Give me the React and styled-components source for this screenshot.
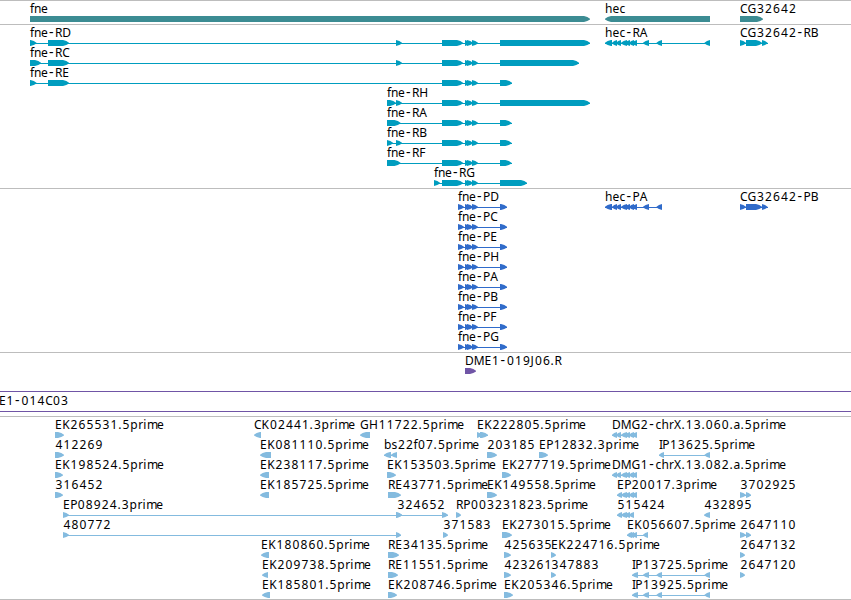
import React from 'react'
import styled, { createGlobalStyle } from 'styled-components'

const GlobalStyle = createGlobalStyle`
  body {
    margin: 0;
    background: #fff;
    overflow: hidden;
  }
`
const Browser = styled.main`
  display: flex;
  flex-direction: column;
  width: 851px;
  height: 600px;
  box-sizing: border-box;
  overflow: hidden;
  background: #fff;
`
const Track = styled.section`
  border-top: 1px solid #bdbdbd;
  padding: 1px 0 ${props => (props.$last ? 1 : 2)}px;
  color: ${props => props.$color};
  ${props => props.$last && 'height: 181px; border-bottom: 1px solid #bdbdbd;'}
`
const Row = styled.svg`
  display: block;
  width: 100%;
  height: 20px;
  overflow: visible;
`
const LabelText = styled.text`
  font-family: 'Noto Sans', 'Open Sans', sans-serif;
  font-size: 12px;
  font-kerning: none;
  fill: #000;
`
const Hyphen = styled.tspan`
  font-size: 14px;
`
const Exon = styled.polygon`
  fill: currentColor;
`
const Intron = styled.rect`
  fill: currentColor;
  shape-rendering: crispEdges;
`

// advance of each letter in px, digits are all 8
const ADVANCE = {
  '.': 4, '-': 7, a: 7, b: 7.5, c: 6, e: 7, f: 4, h: 7.5, i: 3.8, m: 10, n: 7,
  p: 8, r: 5, s: 6, A: 8, B: 7.5, C: 7.5, D: 8.7, E: 7.2, G: 9, H: 9.4, I: 3.3,
  J: 4, K: 8, M: 10.7, P: 7.2, R: 7.3, X: 7.5
}

// small shifts that centre a glyph in its advance
const nudge = ch => {
  if (ch === '-') return 0.9
  return /[0-9]/.test(ch) ? 0.4 : 0
}

const Label = ({ text, x }) => {
  const xs = []
  let at = x
  text.split('').forEach(ch => {
    xs.push((at + nudge(ch)).toFixed(1))
    at += ADVANCE[ch] || 8
  })
  const parts = text.split(/(-)/)
  return (
    <LabelText x={xs.join(' ')} y="11">
      {parts.map((part, i) => (part === '-' ? <Hyphen key={i}>-</Hyphen> : part))}
    </LabelText>
  )
}

const exonPoints = ([from, to], reverse) => {
  const head = Math.min(to - from, 6)
  const tip = reverse ? from : to
  const tail = reverse ? to : from
  const dir = reverse ? -1 : 1
  const neck = tip - dir * head
  const mid = tip - dir * head * 0.45
  return `${tail},14 ${neck},14 ${mid},15 ${tip},16.8 ${tip},17.4 ${mid},19 ${neck},20 ${tail},20`
}

const Feature = ({ name, exons, reverse, labelX }) => {
  const start = exons[0][0]
  const end = exons[exons.length - 1][1]
  return (
    <g>
      {exons.length > 1 && <Intron x={start} y="17" width={end - start} height="1" />}
      {exons.map((exon, i) => <Exon key={i} points={exonPoints(exon, reverse)} />)}
      <Label text={name} x={labelX === undefined ? start : labelX} />
    </g>
  )
}

const fwd = (name, ...exons) => ({ name, exons })
const rev = (name, ...exons) => ({ name, exons, reverse: true })

const small = [[465, 470], [467, 473], [472, 478]]
const middle = [[442, 463], ...small]
const hecEnd = [[612, 617], [616, 621], [621, 627], [625, 630], [629, 634], [632, 637]]
const hecCoding = [[605, 612], ...hecEnd, [643, 649], [656.5, 662]]
const cg = [[740, 746], [746, 762], [762, 767.5]]
const ipExons = [[632, 638], [643, 649], [656.5, 662], [704.5, 710]]

const genes = [
  [fwd('fne', [30, 590]), rev('hec', [605, 710]), fwd('CG32642', [740, 763])]
]

const transcripts = [
  [
    fwd('fne-RD', [30, 36.5], [48, 69], [396, 402], ...middle, [500, 590]),
    rev('hec-RA', ...hecCoding, [704.5, 710]),
    fwd('CG32642-RB', ...cg)
  ],
  [fwd('fne-RC', [30, 41], [48, 69], [396, 402], ...middle, [500, 579])],
  [fwd('fne-RE', [30, 36.5], [48, 69], ...middle, [500, 512])],
  [fwd('fne-RH', [387, 396], [396, 402], ...middle, [500, 590])],
  [fwd('fne-RA', [387, 400.5], ...middle, [500, 511.5])],
  [fwd('fne-RB', [387, 393], [396, 402], ...middle, [500, 511.5])],
  [fwd('fne-RF', [387, 400.5], ...middle, [500, 511.5])],
  [fwd('fne-RG', [434, 440], ...middle, [500, 527])]
]

const proteins = ['D', 'C', 'E', 'H', 'A', 'B', 'F', 'G'].map(letter => [
  fwd('fne-P' + letter, [458, 464], ...small, [500, 507])
])
proteins[0].push(rev('hec-PA', ...hecCoding), fwd('CG32642-PB', ...cg))

const ests = [
  [
    fwd('EK265531.5prime', [55, 64]),
    rev('CK02441.3prime', [254, 261]),
    rev('GH11722.5prime', [360, 370]),
    fwd('EK222805.5prime', [477, 482], [480, 488]),
    rev('DMG2-chrX.13.060.a.5prime', ...hecEnd)
  ],
  [
    fwd('412269', [55, 64]),
    rev('EK081110.5prime', [260, 271]),
    rev('bs22f07.5prime', [384, 391], [391, 397]),
    fwd('203185', [487, 497]),
    fwd('EP12832.3prime', [539, 548]),
    rev('IP13625.5prime', [659, 664], [704.5, 710])
  ],
  [
    fwd('EK198524.5prime', [55, 63]),
    rev('EK238117.5prime', [260, 269]),
    fwd('EK153503.5prime', [387, 396]),
    fwd('EK277719.5prime', [502, 511]),
    rev('DMG1-chrX.13.082.a.5prime', ...hecEnd)
  ],
  [
    fwd('316452', [55, 63]),
    rev('EK185725.5prime', [260, 269]),
    fwd('RE43771.5prime', [388, 401]),
    fwd('EK149558.5prime', [487, 497]),
    rev('EP20017.3prime', [617, 622], ...hecEnd.slice(2)),
    fwd('3702925', [740, 746], [746, 751])
  ],
  [
    fwd('EP08924.3prime', [63, 69], [396, 402]),
    { ...fwd('324652', [396, 402], [442, 448]), labelX: 397 },
    fwd('RP003231823.5prime', [456, 461]),
    rev('515424', [617, 622], [621, 627], [625, 630], [629, 634]),
    rev('432895', [704, 710])
  ],
  [
    fwd('480772', [63, 69], [396, 401]),
    fwd('371583', [443, 448]),
    fwd('EK273015.5prime', [502, 512]),
    rev('EK056607.5prime', [627, 632], [629, 634], [632, 637], [643, 648]),
    fwd('2647110', [740, 746], [746, 751])
  ],
  [
    rev('EK180860.5prime', [261, 269]),
    fwd('RE34135.5prime', [388, 399]),
    fwd('425635', [504, 511]),
    fwd('EK224716.5prime', [551, 556]),
    fwd('2647132', [740, 745])
  ],
  [
    rev('EK209738.5prime', [262, 268]),
    fwd('RE11551.5prime', [388, 398]),
    fwd('423261', [504, 511]),
    fwd('347883', [551, 556]),
    rev('IP13725.5prime', ...ipExons),
    fwd('2647120', [740, 745])
  ],
  [
    rev('EK185801.5prime', [262, 270]),
    fwd('EK208746.5prime', [388, 397]),
    fwd('EK205346.5prime', [504, 513]),
    rev('IP13925.5prime', ...ipExons)
  ]
]

const Rows = ({ rows }) => rows.map((features, i) => (
  <Row key={i}>
    {features.map(feature => <Feature key={feature.name} {...feature} />)}
  </Row>
))

const App = () => (
  <>
    <GlobalStyle />
    <Browser>
      <Track $color="#3c8c93"><Rows rows={genes} /></Track>
      <Track $color="#009dbf"><Rows rows={transcripts} /></Track>
      <Track $color="#306bca"><Rows rows={proteins} /></Track>
      <Track $color="#7055a6">
        <Rows rows={[[fwd('DME1-019J06.R', [465, 476])]]} />
        {/* clones that run past both edges of the view */}
        <Row><Intron x="0" y="17" width="851" height="1" /></Row>
        <Row>
          <Intron x="0" y="17" width="851" height="1" />
          <Label text="E1-014C03" x={-1} />
        </Row>
      </Track>
      <Track $color="#84bbdf" $last><Rows rows={ests} /></Track>
    </Browser>
  </>
)

export default App
